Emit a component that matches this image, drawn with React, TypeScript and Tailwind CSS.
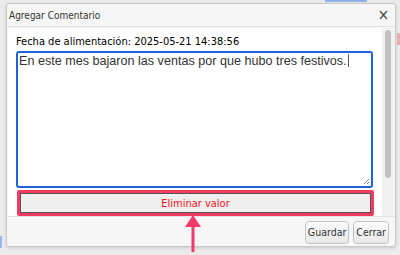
import React from "react";

export default function App() {
  const ui = { fontFamily: '"DejaVu Sans Condensed", "DejaVu Sans", sans-serif' };
  return (
    <div className="relative w-[400px] h-[255px] overflow-hidden bg-[#ebebeb]" style={ui}>
      <div className="absolute left-[325px] top-0 w-[42px] h-[2px] bg-[#8fb0e8]" />
      <div className="absolute right-0 top-[33px] w-[3px] h-[12px] bg-[#e7b3b3]" />
      <div className="absolute left-0 top-[236px] w-[2px] h-[12px] bg-[#9bb6e6]" />
      <div className="pt-[3px] pl-[6px]">
        <div className="relative w-[390px] h-[244px] border border-[#c9c9c9] rounded-[3px] bg-[#f6f6f6] shadow-[0_1px_3px_rgba(0,0,0,0.15)] flex flex-col">
          <div className="h-[23px] flex items-center justify-between pl-[2px] pr-[6px] border-b border-[#e2e2e2]">
            <span className="text-[10px] text-[#333]">Agregar Comentario</span>
            <span className="text-[15px] leading-none text-[#444]">×</span>
          </div>
          <div className="flex h-[188px] mt-[1px] ml-[1px] mr-[2px]">
            <div className="flex-1 bg-white pl-[8px] pt-[7px] flex flex-col">
              <div className="text-[11px] leading-[13px] text-black">Fecha de alimentación: 2025-05-21 14:38:56</div>
              <div
                className="mt-[3px] w-[357px] h-[137px] border-2 border-[#1c63d8] rounded-[3px] relative px-[1px] pt-[1px] text-[12.6px] leading-[14px] text-[#333]"
                style={{ fontFamily: '"Liberation Sans", Arial, sans-serif' }}
              >
                <span>En este mes bajaron las ventas por que hubo tres festivos.</span>
                <span className="inline-block w-[1px] h-[13px] bg-[#555] align-[-2px] ml-[1px]" />
                <svg className="absolute right-[1px] bottom-[1px]" width="7" height="7" viewBox="0 0 7 7">
                  <path d="M6 1 L1 6 M6 4 L4 6" stroke="#888" strokeWidth="1" />
                </svg>
              </div>
              <div className="mt-[2px] ml-[1px] w-[357px] h-[26px] border-[3px] border-[#f23b62] rounded-[2px] p-[0px]">
                <div className="h-full bg-[#efefef] border border-[#555] flex items-center justify-center text-[11px] text-[#f5141e] pt-[2px]">
                  Eliminar valor
                </div>
              </div>
            </div>
            <div className="w-[11px] bg-[#f1f1f1] flex justify-center pt-[2px]">
              <div className="w-[6px] h-[148px] rounded-[3px] bg-[#c1c1c1]" />
            </div>
          </div>
          <div className="flex-1 flex items-center justify-end gap-[4px] pr-[6px] pt-[2px] border-t border-[#e5e5e5]">
            <button className="h-[23px] px-[2px] rounded-[4px] border border-[#c4c4c4] bg-gradient-to-b from-[#fbfbfb] to-[#e9e9e9] text-[10.5px] text-[#333]">Guardar</button>
            <button className="h-[23px] px-[2px] rounded-[4px] border border-[#c4c4c4] bg-gradient-to-b from-[#fbfbfb] to-[#e9e9e9] text-[10.5px] text-[#333]">Cerrar</button>
          </div>
        </div>
      </div>
      <svg className="absolute left-[182px] top-[212px]" width="22" height="40" viewBox="0 0 22 40">
        <path d="M11 3 L3 15 L19 15 Z" fill="#f4386a" />
        <path d="M11 12 L11 40" stroke="#f4386a" strokeWidth="3" />
      </svg>
    </div>
  );
}
